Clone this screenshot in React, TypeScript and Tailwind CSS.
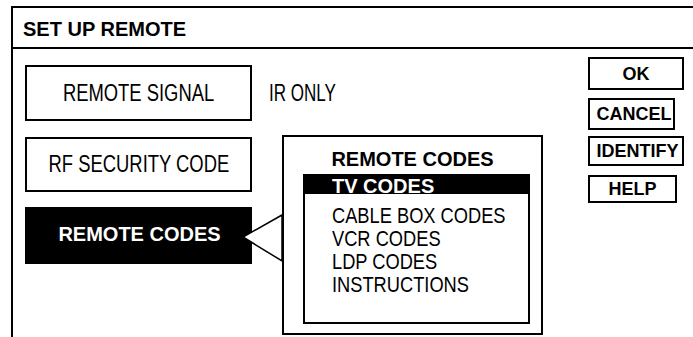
const sans = "font-['Liberation_Sans',Arial,sans-serif]";
const bold = "font-['Liberation_Sans',Arial,sans-serif] font-bold";

const codeItems = ["CABLE BOX CODES", "VCR CODES", "LDP CODES", "INSTRUCTIONS"];

// condensed look: Liberation Sans squeezed horizontally
function Narrow({ children, left, tight }: { children: string; left?: boolean; tight?: boolean }) {
  return (
    <span
      className={`inline-block whitespace-nowrap ${tight ? "scale-x-[0.74]" : "scale-x-[0.8]"} ${left ? "origin-left" : "origin-center"}`}
    >
      {children}
    </span>
  );
}

function SideButton({ label, className }: { label: string; className: string }) {
  return (
    <div
      className={`flex items-center justify-center border-2 border-black text-[18px] leading-none text-black ${bold} ${className}`}
    >
      {label}
    </div>
  );
}

export default function App() {
  return (
    <div className="w-[693px] h-[337px] overflow-hidden bg-white pl-[11px] pt-[6px]">
      <div className="w-[720px] h-[400px] border-l-2 border-t-2 border-black">
        {/* title bar */}
        <div className="h-[41px] border-b-2 border-black pl-[10px] pt-[9px]">
          <div className={`text-[20px] leading-[24px] text-black ${bold}`}>SET UP REMOTE</div>
        </div>

        <div className="flex items-start pl-[12px]">
          {/* left column */}
          <div className="mt-[16px] flex w-[227px] flex-col">
            <div className={`flex h-[56px] items-center justify-center border-2 border-black text-[23px] text-black ${sans}`}>
              <Narrow>REMOTE SIGNAL</Narrow>
            </div>
            <div className={`mt-[16px] flex h-[55px] items-center justify-center border-2 border-black text-[23px] text-black ${sans}`}>
              <Narrow>RF SECURITY CODE</Narrow>
            </div>
            <div className={`mt-[15px] flex h-[57px] items-center justify-center bg-black pb-[3px] pl-[2px] text-[20px] text-white ${bold}`}>
              REMOTE CODES
            </div>
          </div>

          {/* middle */}
          <div className="mt-[16px] flex w-[336px] flex-col">
            <div className={`flex h-[56px] items-center pl-[17px] text-[23px] text-black ${sans}`}>
              <Narrow left tight>IR ONLY</Narrow>
            </div>
            <div className="relative ml-[30px] mt-[14px] h-[200px] w-[261px] border-2 border-black pt-[10px]">
              <svg className="absolute left-[-42px] top-[76px]" width="41" height="50" viewBox="0 0 41 50">
                <polygon points="40,2 1,24 40,48" fill="white" stroke="black" strokeWidth="1.5" />
              </svg>
              <div className={`text-center text-[20px] leading-[24px] text-black ${bold}`}>REMOTE CODES</div>
              <div className="ml-[19px] mt-[3px] h-[150px] w-[227px] border-2 border-black">
                <div className={`h-[18px] bg-black pl-[27px] text-[20px] leading-[21px] text-white ${bold}`}>
                  TV CODES
                </div>
                <div className={`pl-[27px] pt-[10px] text-[22px] leading-[23px] text-black ${sans}`}>
                  {codeItems.map((item) => (
                    <div key={item}>
                      <span className="inline-block origin-left scale-x-[0.83] whitespace-nowrap">{item}</span>
                    </div>
                  ))}
                </div>
              </div>
            </div>
          </div>

          {/* right buttons */}
          <div className="mt-[8px] flex flex-col">
            <SideButton label="OK" className="h-[33px] w-[96px]" />
            <SideButton label="CANCEL" className="mt-[8px] h-[32px] w-[87px] pl-[5px]" />
            <SideButton label="IDENTIFY" className="mt-[6px] h-[30px] w-[96px] pl-[3px]" />
            <SideButton label="HELP" className="mt-[9px] h-[28px] w-[89px]" />
          </div>
        </div>
      </div>
    </div>
  );
}
